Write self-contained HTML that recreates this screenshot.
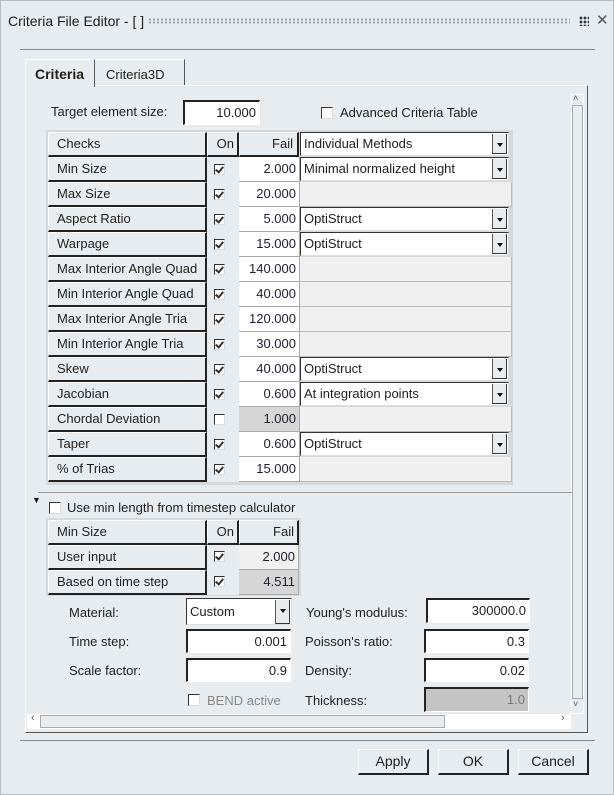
<!DOCTYPE html>
<html><head><meta charset="utf-8"><style>
*{box-sizing:border-box;margin:0;padding:0}
body{width:614px;height:795px;background:#e6ecef;font-family:"Liberation Sans",Arial,sans-serif;font-size:13px;color:#1e1e1e;position:relative;overflow:hidden;border:1px solid #b8bfc4}
.a{position:absolute;white-space:nowrap}
.hd{position:absolute;background:#e6ecef;border-right:2px solid #222;border-bottom:2px solid #222;border-top:1px solid #fff;border-left:1px solid #fff;padding-left:8px;line-height:22px}
.num{position:absolute;background:#fff;text-align:right;padding-right:3px;line-height:24px;color:#1e1e2e;border-right:1px solid #aaa;border-bottom:1px solid #aaa}
.emp{position:absolute;background:#f0f0f0;border-right:1px solid #bbb;border-bottom:1px solid #bbb}
.cmb{position:absolute;background:#fff;border:1px solid #333;border-right:1px solid #ddd;border-bottom:1px solid #ddd;line-height:21px;padding-left:3px}
.cmb .ar{position:absolute;right:1px;top:1px;width:15px;height:20px;background:#e8ecee;border-left:1px solid #555;border-right:1px solid #333;border-bottom:1px solid #333}
.cmb .ar:after{content:"";position:absolute;left:4px;top:9px;border-left:3.5px solid transparent;border-right:3.5px solid transparent;border-top:4px solid #111}
.cb{position:absolute;width:11px;height:11px;background:#fff;border-top:1px solid #333;border-left:1px solid #333;border-right:1px solid #ddd;border-bottom:1px solid #ddd}
.cb.k:after{content:"";position:absolute;left:2px;top:0px;width:3px;height:6px;border-right:2px solid #333;border-bottom:2px solid #333;transform:rotate(40deg)}
.inp{position:absolute;background:#fff;border-top:2px solid #222;border-left:2px solid #222;border-right:1px solid #fff;border-bottom:1px solid #fff;text-align:right;padding-right:3px;line-height:21px}
.btn{position:absolute;top:748px;width:71px;height:26px;background:#e6ecef;border-top:1px solid #fff;border-left:1px solid #fff;border-right:2px solid #222;border-bottom:2px solid #222;text-align:center;line-height:23px;font-size:14px}
</style></head><body>
<div class="a" style="left:7px;top:12px;font-size:14px">Criteria File Editor - [ ]</div>
<div class="a" style="left:147px;top:17px;width:422px;height:6px;background-image:radial-gradient(circle,#9aa2a8 1px,transparent 1.2px);background-size:4px 3px"></div>
<div class="a" style="left:578px;top:15px;width:10px;height:10px;background-image:radial-gradient(circle,#333 1.3px,transparent 1.5px);background-size:4px 4px"></div>
<div class="a" style="left:595px;top:10px;font-size:15px;color:#555">✕</div>
<div class="a" style="left:19px;top:48px;width:575px;height:1px;background:#888"></div>
<!-- tabs -->
<div class="a" style="left:24px;top:58px;width:70px;height:28px;background:#e6ecef;border-left:1px solid #fff;border-top:1px solid #fff;border-right:1px solid #555;z-index:2"></div>
<div class="a" style="left:34px;top:65px;font-weight:bold;font-size:14px;z-index:3">Criteria</div>
<div class="a" style="left:94px;top:58px;width:90px;height:27px;border-top:1px solid #fff;border-right:1px solid #555"></div>
<div class="a" style="left:105px;top:66px">Criteria3D</div>
<div class="a" style="left:24px;top:84px;width:563px;height:648px;border-left:1px solid #fff;border-top:1px solid #fff;border-right:1px solid #555;border-bottom:1px solid #555"></div>
<!-- v scrollbar -->
<div class="a" style="left:570px;top:93px;width:13px;height:620px;background:#e6ecef;border:1px solid #fff"></div>
<div class="a" style="left:571px;top:104px;width:11px;height:594px;border:1px solid #aaa"></div>
<div class="a" style="left:572px;top:92px;font-size:9px;color:#555">˄</div>
<div class="a" style="left:572px;top:698px;font-size:9px;color:#555">˅</div>
<!-- h scrollbar -->
<div class="a" style="left:26px;top:713px;width:544px;height:15px;background:#fff"></div>
<div class="a" style="left:39px;top:714px;width:405px;height:13px;background:#e6ecef;border:1px solid #aaa"></div>
<div class="a" style="left:30px;top:711px;font-size:11px;color:#555">‹</div>
<div class="a" style="left:560px;top:711px;font-size:11px;color:#555">›</div>

<div class="a" style="left:50px;top:103px">Target element size:</div>
<div class="inp" style="left:182px;top:99px;width:77px;height:25px;line-height:22px">10.000</div>
<div class="cb" style="left:320px;top:106px;width:12px;height:12px"></div>
<div class="a" style="left:339px;top:104px">Advanced Criteria Table</div>
<!-- table -->
<div class="a" style="left:45px;top:129px;width:467px;height:355px;background:#d6d9db"></div>
<div class="hd" style="left:47px;top:131px;width:159px;height:25px">Checks</div>
<div class="hd" style="left:206px;top:131px;width:32px;height:25px;text-align:right;padding-right:3px">On</div>
<div class="hd" style="left:238px;top:131px;width:60px;height:25px;text-align:right;padding-right:4px">Fail</div>
<div class="cmb" style="left:299px;top:131px;width:209px;height:24px">Individual Methods<div class="ar"></div></div>
<div id="rows"></div>
<div class="a" style="left:37px;top:491px;width:534px;height:1px;background:#999"></div>
<div class="a" style="left:31px;top:494px;font-size:9px">▼</div>
<div class="cb" style="left:48px;top:501px;width:12px;height:12px"></div>
<div class="a" style="left:66px;top:499px">Use min length from timestep calculator</div>
<div class="a" style="left:45px;top:517px;width:255px;height:78px;background:#d6d9db"></div>
<div class="hd" style="left:47px;top:519px;width:159px;height:25px">Min Size</div>
<div class="hd" style="left:206px;top:519px;width:32px;height:25px;text-align:right;padding-right:3px">On</div>
<div class="hd" style="left:238px;top:519px;width:60px;height:25px;text-align:right;padding-right:3px">Fail</div>
<div class="hd" style="left:47px;top:544px;width:159px;height:25px">User input</div>
<div class="a" style="left:206px;top:544px;width:32px;height:25px;background:#e6ecef"></div>
<div class="cb k" style="left:213px;top:550px"></div>
<div class="num" style="left:238px;top:544px;width:60px;height:25px;background:#f0f0f0">2.000</div>
<div class="hd" style="left:47px;top:569px;width:159px;height:25px">Based on time step</div>
<div class="a" style="left:206px;top:569px;width:32px;height:25px;background:#e6ecef"></div>
<div class="cb k" style="left:213px;top:575px"></div>
<div class="num" style="left:238px;top:569px;width:60px;height:25px;background:#d6d6d6">4.511</div>
<!-- form -->
<div class="a" style="left:68px;top:604px">Material:</div>
<div class="cmb" style="left:185px;top:597px;width:106px;height:27px;line-height:25px;border-width:1px">Custom<div class="ar" style="height:24px"></div></div>
<div class="a" style="left:305px;top:604px">Young's modulus:</div>
<div class="inp" style="left:425px;top:597px;width:104px;height:25px">300000.0</div>
<div class="a" style="left:68px;top:633px">Time step:</div>
<div class="inp" style="left:185px;top:628px;width:105px;height:24px">0.001</div>
<div class="a" style="left:304px;top:633px">Poisson's ratio:</div>
<div class="inp" style="left:423px;top:628px;width:105px;height:24px">0.3</div>
<div class="a" style="left:68px;top:662px">Scale factor:</div>
<div class="inp" style="left:185px;top:657px;width:105px;height:24px">0.9</div>
<div class="a" style="left:304px;top:662px">Density:</div>
<div class="inp" style="left:423px;top:657px;width:105px;height:24px">0.02</div>
<div class="cb" style="left:187px;top:693px;width:12px;height:12px"></div>
<div class="a" style="left:206px;top:692px;color:#888">BEND active</div>
<div class="a" style="left:304px;top:692px">Thickness:</div>
<div class="inp" style="left:423px;top:686px;width:105px;height:25px;background:#c4c4c4;color:#777">1.0</div>
<div class="a" style="left:19px;top:739px;width:575px;height:1px;background:#888"></div>
<div class="btn" style="left:357px">Apply</div>
<div class="btn" style="left:437px">OK</div>
<div class="btn" style="left:517px">Cancel</div>
<script>
var R=[["Min Size",1,"2.000","Minimal normalized height"],["Max Size",1,"20.000",""],["Aspect Ratio",1,"5.000","OptiStruct"],["Warpage",1,"15.000","OptiStruct"],["Max Interior Angle Quad",1,"140.000",""],["Min Interior Angle Quad",1,"40.000",""],["Max Interior Angle Tria",1,"120.000",""],["Min Interior Angle Tria",1,"30.000",""],["Skew",1,"40.000","OptiStruct"],["Jacobian",1,"0.600","At integration points"],["Chordal Deviation",0,"1.000",""],["Taper",1,"0.600","OptiStruct"],["% of Trias",1,"15.000",""]];
var h="";R.forEach(function(r,i){var y=156+i*25;
h+='<div class="hd" style="left:47px;top:'+y+'px;width:159px;height:25px">'+r[0]+'</div>';
h+='<div class="a" style="left:206px;top:'+y+'px;width:32px;height:25px;background:#e6ecef"></div>';
h+='<div class="cb'+(r[1]?' k':'')+'" style="left:213px;top:'+(y+7)+'px"></div>';
h+='<div class="num" style="left:238px;top:'+y+'px;width:61px;height:25px;'+(r[1]?'':'background:#d6d6d6;')+'">'+r[2]+'</div>';
if(r[3])h+='<div class="cmb" style="left:299px;top:'+y+'px;width:209px;height:24px">'+r[3]+'<div class="ar"></div></div>';
else h+='<div class="emp" style="left:299px;top:'+y+'px;width:212px;height:25px"></div>';});
document.getElementById("rows").outerHTML=h;
</script>
</body></html>
